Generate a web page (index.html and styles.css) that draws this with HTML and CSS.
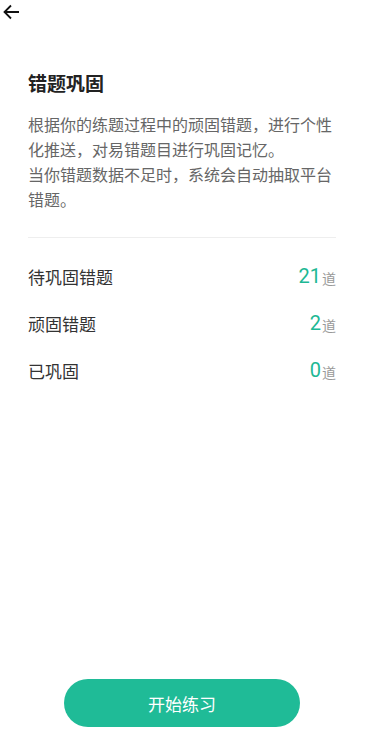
FILE: index.html
```html
<!DOCTYPE html>
<html>
<head>
<meta charset="UTF-8">
<title>错题巩固</title>
<link rel="stylesheet" href="styles.css">
</head>
<body>

<div class="top">
  <svg class="back" width="18" height="18" viewBox="0 0 18 18"><path d="M17 9H2.5M9 2.5L2.5 9l6.5 6.5" fill="none" stroke="#111" stroke-width="1.8"/></svg>
</div>

<div class="main">
  <h1>错题巩固</h1>
  <p class="desc">根据你的练题过程中的顽固错题，进行个性化推送，对易错题目进行巩固记忆。<br>当你错题数据不足时，系统会自动抽取平台错题。</p>

  <div class="list">
    <div class="row"><span class="label">待巩固错题</span><span class="val"><b>21</b>道</span></div>
    <div class="row"><span class="label">顽固错题</span><span class="val"><b>2</b>道</span></div>
    <div class="row"><span class="label">已巩固</span><span class="val"><b>0</b>道</span></div>
  </div>
</div>

<div class="foot">
  <button class="btn">开始练习</button>
</div>

</body>
</html>
```

FILE: styles.css
```css
body { margin:0; background:#fff; font-family:"Noto Sans CJK SC", "Noto Sans", sans-serif; min-height:100vh; display:flex; flex-direction:column; }
.top { height:24px; position:relative; }
.back { position:absolute; left:2px; top:3px; }
.main { padding:0 37px 0 28px; flex:1; }
h1 { font-size:19px; line-height:26px; font-weight:700; color:#222; margin:46px 0 0; }
.desc { font-size:16px; line-height:25px; color:#666; margin:16px 0 0; padding-bottom:25px; border-bottom:1px solid #eee; }
.list { padding-top:15px; }
.row { height:47px; display:flex; justify-content:space-between; align-items:center; }
.label { font-size:17px; color:#333; }
.val { font-size:14px; color:#999; display:flex; align-items:baseline; }
.val b { font-family:Roboto, sans-serif; font-weight:400; font-size:20px; color:#1db894; margin-right:1px; position:relative; top:-1px; }
.foot { display:flex; justify-content:center; padding:0 9px 26px 0; }
.btn { width:236px; height:48px; border:none; border-radius:24px; background:#1fbb97; color:#fff; font-size:17px; font-family:inherit; }
```
